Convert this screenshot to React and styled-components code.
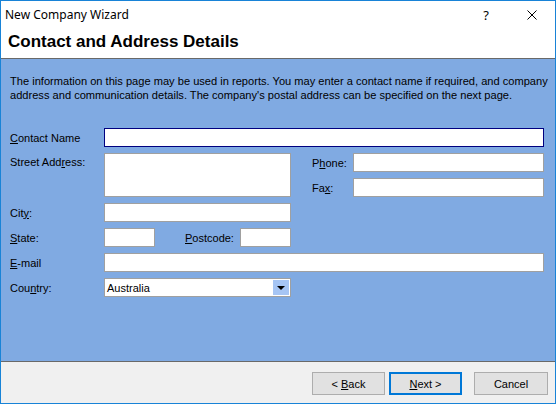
import React from "react";
import styled, { createGlobalStyle } from "styled-components";

const Global = createGlobalStyle`
  html, body { margin: 0; padding: 0; background: #ffffff; }
  body { font-family: "Liberation Sans", Arial, sans-serif; }
  * { box-sizing: border-box; }
`;

const Window = styled.div`
  width: 556px;
  height: 404px;
  border: 1px solid #1883d7;
  display: flex;
  flex-direction: column;
  background: #ffffff;
  overflow: hidden;
`;

const TitleBar = styled.div`
  height: 27px;
  display: flex;
  align-items: center;
  padding-left: 4px;
  font-family: "Noto Sans", "Open Sans", sans-serif;
  font-size: 12px;
  color: #000;
`;

const TitleText = styled.div`
  flex: 1;
`;

const CaptionButton = styled.div`
  width: 46px;
  height: 27px;
  display: flex;
  align-items: center;
  justify-content: center;
  font-size: 13px;
`;

const Header = styled.div`
  height: 31px;
  padding: 0 0 0 7px;
  display: flex;
  align-items: center;
  border-bottom: 1px solid #696969;
`;

const HeaderTitle = styled.h1`
  margin: 0;
  font-family: "Liberation Sans", Arial, sans-serif;
  font-weight: 700;
  font-size: 17px;
  color: #000;
  position: relative;
  top: -1px;
`;

const Body = styled.div`
  flex: 1;
  background: #80aae2;
  padding: 15px 0 0 9px;
  border-bottom: 1px solid #696969;
  font-size: 11px;
  color: #000;
`;

const Intro = styled.p`
  margin: 0;
  font-size: 11.1px;
  line-height: 14px;
  white-space: nowrap;
`;

const Form = styled.div`
  margin-top: 26px;
  display: grid;
  grid-template-columns: 94px 187px 21px 41px 191px;
  grid-auto-rows: 19px;
  row-gap: 6px;
`;

const Label = styled.label`
  grid-column: ${(p) => p.$col || 1};
  grid-row: ${(p) => p.$row};
  display: flex;
  align-items: ${(p) => (p.$top ? "flex-start" : "center")};
  padding-top: ${(p) => (p.$top ? 3 : 0)}px;
  white-space: nowrap;
  u { text-decoration: underline; text-underline-offset: 1px; }
`;

const Field = styled.div`
  grid-column: ${(p) => p.$col};
  grid-row: ${(p) => p.$row};
  background: #ffffff;
  border: 1px solid ${(p) => (p.$focused ? "#000080" : "#a0a0a0")};
`;

const SplitCell = styled.div`
  grid-column: 2;
  grid-row: ${(p) => p.$row};
  display: grid;
  grid-template-columns: 51px 30px 55px 51px;
`;

const SmallBox = styled.div`
  background: #ffffff;
  border: 1px solid #a0a0a0;
`;

const Select = styled.div`
  grid-column: 2;
  grid-row: ${(p) => p.$row};
  background: #ffffff;
  border: 1px solid #a0a0a0;
  display: flex;
  align-items: center;
  padding: 1px 1px 1px 2px;
`;

const SelectValue = styled.div`
  flex: 1;
  font-size: 11px;
`;

const DropButton = styled.div`
  width: 16px;
  height: 100%;
  background: #a6c5f4;
  display: flex;
  align-items: center;
  justify-content: center;
`;

const Arrow = styled.div`
  width: 0;
  height: 0;
  border-left: 4px solid transparent;
  border-right: 4px solid transparent;
  border-top: 4px solid #000;
`;

const Footer = styled.div`
  height: 41px;
  background: #f0f0f0;
  display: flex;
  justify-content: flex-end;
  align-items: flex-start;
  padding: 10px 7px 0 0;
  gap: 4px;
`;

const Button = styled.button`
  width: ${(p) => p.$w || 73}px;
  height: 23px;
  margin-left: ${(p) => p.$gap || 0}px;
  background: #e1e1e1;
  border: ${(p) => (p.$default ? "2px solid #0078d7" : "1px solid #adadad")};
  font-family: "Liberation Sans", Arial, sans-serif;
  font-size: 11px;
  color: #000;
  padding: 0;
  u { text-decoration: underline; }
`;

export default function App() {
  return (
    <>
      <Global />
      <Window>
        <TitleBar>
          <TitleText>New Company Wizard</TitleText>
          <CaptionButton>?</CaptionButton>
          <CaptionButton>
            <svg width="10" height="10" viewBox="0 0 10 10">
              <path d="M0.5 0.5 L9.5 9.5 M9.5 0.5 L0.5 9.5" stroke="#000" strokeWidth="1" />
            </svg>
          </CaptionButton>
        </TitleBar>
        <Header>
          <HeaderTitle>Contact and Address Details</HeaderTitle>
        </Header>
        <Body>
          <Intro>
            The information on this page may be used in reports. You may enter a contact name if required, and company
            <br />
            address and communication details. The company's postal address can be specified on the next page.
          </Intro>
          <Form>
            <Label $row={1}><span><u>C</u>ontact Name</span></Label>
            <Field $col="2 / 6" $row={1} $focused />

            <Label $row={2} $top>
              <span>Street Add<u>r</u>ess:</span>
            </Label>
            <Field $col={2} $row="2 / 4" />
            <Label $col={4} $row={2}><span>P<u>h</u>one:</span></Label>
            <Field $col={5} $row={2} />
            <Label $col={4} $row={3}><span>Fa<u>x</u>:</span></Label>
            <Field $col={5} $row={3} />

            <Label $row={4}><span>Cit<u>y</u>:</span></Label>
            <Field $col={2} $row={4} />

            <Label $row={5}><span><u>S</u>tate:</span></Label>
            <SplitCell $row={5}>
              <SmallBox />
              <span />
              <Label $row={1} $col={3}><span><u>P</u>ostcode:</span></Label>
              <SmallBox />
            </SplitCell>

            <Label $row={6}><span><u>E</u>-mail</span></Label>
            <Field $col="2 / 6" $row={6} />

            <Label $row={7}><span>Cou<u>n</u>try:</span></Label>
            <Select $row={7}>
              <SelectValue>Australia</SelectValue>
              <DropButton><Arrow /></DropButton>
            </Select>
          </Form>
        </Body>
        <Footer>
          <Button $w={73}>&lt; <u>B</u>ack</Button>
          <Button $w={73} $default><u>N</u>ext &gt;</Button>
          <Button $w={74} $gap={8}>Cancel</Button>
        </Footer>
      </Window>
    </>
  );
}
